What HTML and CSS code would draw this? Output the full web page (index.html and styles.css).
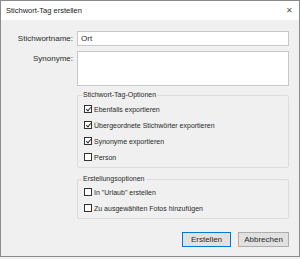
FILE: index.html
```html
<!DOCTYPE html>
<html lang="de">
<head>
    <meta charset="UTF-8">
    <title>Stichwort-Tag erstellen</title>
    <link rel="stylesheet" href="styles.css">
</head>
<body>
    <div class="dialog">
        <div class="titlebar">
            <span class="title">Stichwort-Tag erstellen</span>
            <span class="close">&#x2715;</span>
        </div>

        <div class="content">
            <div class="form-grid">
                <label class="field-label">Stichwortname:</label>
                <input type="text" class="field-input" value="Ort">
                <label class="field-label">Synonyme:</label>
                <textarea class="field-area"></textarea>
            </div>

            <fieldset class="group group-tags">
                <legend>Stichwort-Tag-Optionen</legend>
                <label class="check"><span class="box checked"></span>Ebenfalls exportieren</label>
                <label class="check"><span class="box checked"></span>Übergeordnete Stichwörter exportieren</label>
                <label class="check"><span class="box checked"></span>Synonyme exportieren</label>
                <label class="check"><span class="box"></span>Person</label>
            </fieldset>

            <fieldset class="group group-create">
                <legend>Erstellungsoptionen</legend>
                <label class="check"><span class="box"></span>In "Urlaub" erstellen</label>
                <label class="check"><span class="box"></span>Zu ausgewählten Fotos hinzufügen</label>
            </fieldset>

            <div class="buttons">
                <button class="btn btn-default">Erstellen</button>
                <button class="btn">Abbrechen</button>
            </div>
        </div>
    </div>
</body>
</html>
```

FILE: styles.css
```css
:root {
    --dialog-bg: #f0f0f0;
    --border-color: #8a8a8a;
    --input-border: #c8c8c8;
    --group-border: #dcdcdc;
    --text-color: #2a2a2a;
    --accent-color: #0078d7;
}

* {
    box-sizing: border-box;
}

body {
    margin: 0;
    font-family: 'Liberation Sans', Arial, sans-serif;
    font-size: 7px;
    color: var(--text-color);
    background: var(--dialog-bg);
}

.dialog {
    width: 300px;
    height: 257px;
    border: 1px solid var(--border-color);
    background: var(--dialog-bg);
    display: flex;
    flex-direction: column;
}

.titlebar {
    height: 19px;
    background: white;
    display: flex;
    align-items: center;
    justify-content: space-between;
    padding: 0 6px 0 5px;
}

.title {
    font-size: 7.5px;
    color: #1a1a1a;
}

.close {
    font-size: 8px;
    color: #555;
}

.content {
    padding: 11px 10px 0 16px;
}

.form-grid {
    display: grid;
    grid-template-columns: 60px 1fr;
    row-gap: 5px;
}

.field-label {
    text-align: right;
    padding-right: 4px;
    line-height: 15px;
    font-size: 8px;
}

.field-input,
.field-area {
    font: inherit;
    font-size: 8px;
    color: var(--text-color);
    border: 1px solid var(--input-border);
    background: white;
    margin: 0;
    padding: 0 3px;
    outline: none;
}

.field-input {
    height: 15px;
}

.field-area {
    height: 35px;
    resize: none;
}

.group {
    margin: 4px 0 0 60px;
    padding: 1px 0 2px 5px;
    border: 1px solid var(--group-border);
    border-radius: 2px;
}

.group legend {
    padding: 0 1px;
    margin-left: -1px;
    line-height: 10px;
}

.check {
    display: flex;
    align-items: center;
    height: 16px;
    gap: 2px;
}

.box {
    width: 8px;
    height: 8px;
    border: 1px solid #333;
    background: white;
    position: relative;
    margin-left: 1px;
}

.box.checked::after {
    content: '';
    position: absolute;
    left: 2px;
    top: 0;
    width: 2px;
    height: 4px;
    border: solid #333;
    border-width: 0 1px 1px 0;
    transform: rotate(40deg);
}

.group-create {
    margin-top: 6px;
    padding-top: 0;
}

.buttons {
    display: flex;
    justify-content: flex-end;
    gap: 7px;
    margin-top: 13px;
}

.btn {
    font: inherit;
    font-size: 8px;
    color: var(--text-color);
    height: 15px;
    padding: 0;
    width: 51px;
    background: #e1e1e1;
    border: 1px solid #adadad;
}

.btn-default {
    width: 49px;
    border: 1px solid var(--accent-color);
}
```
